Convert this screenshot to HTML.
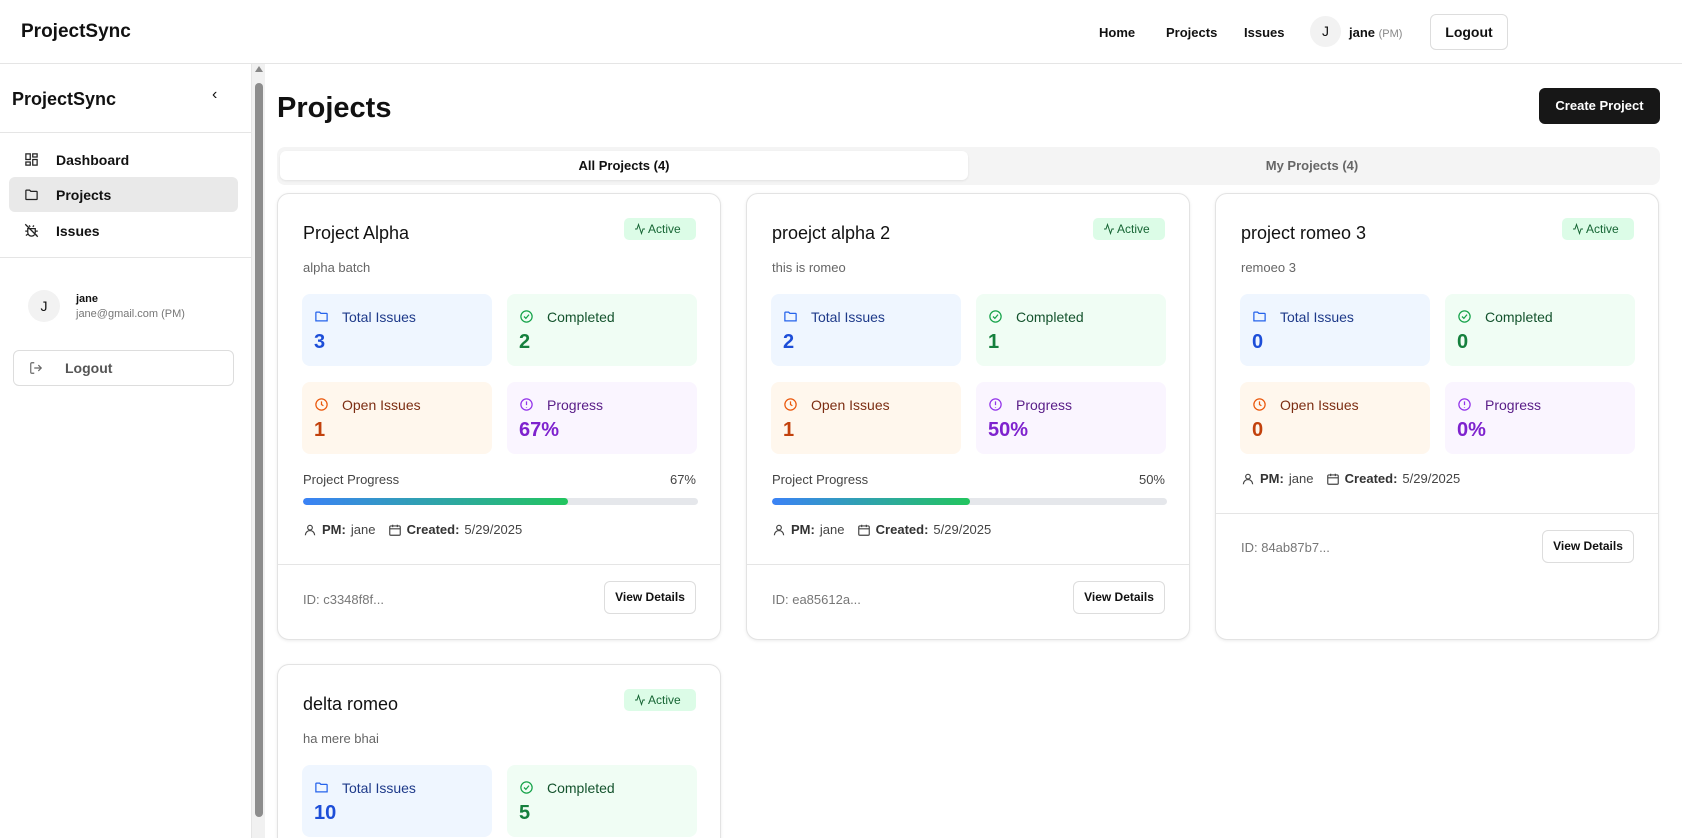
<!DOCTYPE html>
<html><head><meta charset="utf-8"><style>
*{box-sizing:border-box;margin:0;padding:0}
html{height:838px;overflow:hidden}
body{width:1682px;height:838px;overflow:hidden;font-family:"Liberation Sans",sans-serif;background:#fff;color:#111;position:relative}
.top{position:absolute;left:0;top:0;width:1682px;height:64px;border-bottom:1px solid #e5e5e5;background:#fff}
.brand{position:absolute;left:21px;top:21px;font-size:19px;font-weight:bold}
.nl{position:absolute;top:25px;font-size:13px;font-weight:bold}
.side{position:absolute;left:0;top:64px;width:252px;height:774px;border-right:1px solid #e5e5e5}
.scroll{position:absolute;left:252px;top:64px;width:13px;height:774px;background:#f1f1f1}
.thumb{position:absolute;left:3px;top:19px;width:8px;height:734px;background:#8d8d8d;border-radius:4px}
.av{position:absolute;border-radius:50%;background:#f2f2f2;text-align:center;font-size:14px}
.card{position:absolute;width:444px;border:1px solid #e3e3e3;border-radius:12px;box-shadow:0 1px 3px rgba(0,0,0,.08);background:#fff;overflow:hidden}
.ct{position:absolute;left:25px;top:29px;font-size:18px;font-weight:500}
.badge{position:absolute;right:24px;top:24px;width:72px;height:22px;background:#dcfce7;border-radius:5px;color:#166534;font-size:12px;line-height:22px;padding-left:24px}
.badge svg{position:absolute;left:10px;top:5px}
.desc{position:absolute;left:25px;top:66px;font-size:13px;color:#666}
.st{position:absolute;width:190px;height:72px;border-radius:8px}
.st .l{position:absolute;left:40px;top:15px;font-size:14px}
.st svg{position:absolute;left:12px;top:15px}
.st .n{position:absolute;left:12px;top:37px;font-size:20px;font-weight:bold}
.b{background:#eff6ff}.b .l{color:#1e3a8a}.b .n{color:#1d4ed8}
.g{background:#f0fdf4}.g .l{color:#14532d}.g .n{color:#15803d}
.o{background:#fff7ed}.o .l{color:#7c2d12}.o .n{color:#c2410c}
.p{background:#faf5ff}.p .l{color:#581c87}.p .n{color:#7e22ce}
.pl{position:absolute;left:25px;font-size:13px;color:#444}
.pr{position:absolute;right:24px;font-size:13px;color:#444}
.bar{position:absolute;left:25px;width:395px;height:7px;border-radius:4px;background:#e5e7eb;overflow:hidden}
.bar div{height:100%;background:linear-gradient(90deg,#3b82f6,#22c55e);border-radius:4px}
.meta{position:absolute;left:25px;font-size:13px;color:#444;display:flex;align-items:center;gap:5px}
.meta b{color:#333}
.hr{position:absolute;left:0;width:100%;border-top:1px solid #e5e5e5}
.id{position:absolute;left:25px;font-size:13px;color:#777}
.vd{position:absolute;right:24px;width:92px;height:33px;border:1px solid #ddd;border-radius:6px;font-size:12px;font-weight:bold;text-align:center;line-height:31px}
</style></head><body>
<div class="top">
<div class="brand">ProjectSync</div>
<div class="nl" style="left:1099px">Home</div>
<div class="nl" style="left:1166px">Projects</div>
<div class="nl" style="left:1244px">Issues</div>
<div class="av" style="left:1310px;top:16px;width:31px;height:31px;line-height:31px">J</div>
<div class="nl" style="left:1349px">jane <span style="color:#888;font-weight:normal;font-size:11px">(PM)</span></div>
<div style="position:absolute;left:1430px;top:14px;width:78px;height:36px;border:1px solid #ddd;border-radius:6px;font-size:14px;font-weight:bold;text-align:center;line-height:34px">Logout</div>
</div>
<div class="side">
<div style="position:absolute;left:12px;top:25px;font-size:18px;font-weight:bold">ProjectSync</div>
<div style="position:absolute;left:212px;top:22px;font-size:16px">&#8249;</div>
<div style="position:absolute;left:0;top:68px;width:251px;border-top:1px solid #e5e5e5"></div>
<svg style="position:absolute;left:24px;top:88px" width="15" height="15" viewBox="0 0 24 24" fill="none" stroke="#222" stroke-width="2"><rect x="3" y="3" width="7" height="9"/><rect x="14" y="3" width="7" height="5"/><rect x="14" y="12" width="7" height="9"/><rect x="3" y="16" width="7" height="5"/></svg>
<div style="position:absolute;left:56px;top:88px;font-size:14px;font-weight:bold">Dashboard</div>
<div style="position:absolute;left:9px;top:113px;width:229px;height:35px;background:#e9e9e9;border-radius:6px"></div>
<svg style="position:absolute;left:24px;top:123px" width="15" height="15" viewBox="0 0 24 24" fill="none" stroke="#222" stroke-width="2"><path d="M3 6a1 1 0 0 1 1-1h5l2 2h9a1 1 0 0 1 1 1v11a1 1 0 0 1-1 1H4a1 1 0 0 1-1-1z"/></svg>
<div style="position:absolute;left:56px;top:123px;font-size:14px;font-weight:bold">Projects</div>
<svg style="position:absolute;left:24px;top:159px" width="15" height="15" viewBox="0 0 24 24" fill="none" stroke="#222" stroke-width="2"><path d="M2 2l20 20M8 4l2 2M16 4l-2 2M6 9h12v6a6 6 0 0 1-12 0zM2 13h4M18 13h4M3 20l3-2M21 20l-3-2"/></svg>
<div style="position:absolute;left:56px;top:159px;font-size:14px;font-weight:bold">Issues</div>
<div style="position:absolute;left:0;top:193px;width:251px;border-top:1px solid #e5e5e5"></div>
<div class="av" style="left:28px;top:226px;width:32px;height:32px;line-height:32px">J</div>
<div style="position:absolute;left:76px;top:229px;font-size:11px;font-weight:bold">jane</div>
<div style="position:absolute;left:76px;top:244px;font-size:11px;color:#777">jane@gmail.com (PM)</div>
<div style="position:absolute;left:13px;top:286px;width:221px;height:36px;border:1px solid #ddd;border-radius:6px"></div>
<svg style="position:absolute;left:29px;top:297px" width="14" height="14" viewBox="0 0 24 24" fill="none" stroke="#666" stroke-width="2"><path d="M9 21H5a2 2 0 0 1-2-2V5a2 2 0 0 1 2-2h4M16 17l5-5-5-5M21 12H9"/></svg>
<div style="position:absolute;left:65px;top:296px;font-size:14px;font-weight:bold;color:#555">Logout</div>
</div>
<div class="scroll"><div style="position:absolute;left:3px;top:2px;width:0;height:0;border-left:4px solid transparent;border-right:4px solid transparent;border-bottom:6px solid #888"></div><div class="thumb"></div></div>

<div style="position:absolute;left:277px;top:92px;font-size:29px;font-weight:bold">Projects</div>
<div style="position:absolute;left:1539px;top:88px;width:121px;height:36px;background:#171717;color:#fff;border-radius:6px;font-size:13px;font-weight:bold;text-align:center;line-height:36px">Create Project</div>
<div style="position:absolute;left:277px;top:147px;width:1383px;height:38px;background:#f4f4f4;border-radius:8px">
<div style="position:absolute;left:3px;top:4px;width:688px;height:29px;background:#fff;border-radius:6px;box-shadow:0 1px 2px rgba(0,0,0,.08);text-align:center;line-height:29px;font-size:13px;font-weight:bold">All Projects (4)</div>
<div style="position:absolute;left:691px;top:4px;width:688px;height:29px;text-align:center;line-height:29px;font-size:13px;font-weight:bold;color:#666">My Projects (4)</div>
</div>

<div class="card" style="left:277px;top:193px;height:447px">
<div class="ct">Project Alpha</div>
<div class="badge"><svg width="12" height="12" viewBox="0 0 24 24" fill="none" stroke="#166534" stroke-width="2"><path d="M22 12h-4l-3 9L9 3l-3 9H2"/></svg>Active</div>
<div class="desc">alpha batch</div>
<div class="st b" style="left:24px;top:100px"><svg width="15" height="15" viewBox="0 0 24 24" fill="none" stroke="#2563eb" stroke-width="2"><path d="M3 6a1 1 0 0 1 1-1h5l2 2h9a1 1 0 0 1 1 1v11H3z"/></svg><div class="l">Total Issues</div><div class="n">3</div></div>
<div class="st g" style="left:229px;top:100px"><svg width="15" height="15" viewBox="0 0 24 24" fill="none" stroke="#16a34a" stroke-width="2"><circle cx="12" cy="12" r="9"/><path d="M8 12l3 3 5-6"/></svg><div class="l">Completed</div><div class="n">2</div></div>
<div class="st o" style="left:24px;top:188px"><svg width="15" height="15" viewBox="0 0 24 24" fill="none" stroke="#ea580c" stroke-width="2"><circle cx="12" cy="12" r="9"/><path d="M12 7v5l3 2"/></svg><div class="l">Open Issues</div><div class="n">1</div></div>
<div class="st p" style="left:229px;top:188px"><svg width="15" height="15" viewBox="0 0 24 24" fill="none" stroke="#9333ea" stroke-width="2"><circle cx="12" cy="12" r="9"/><path d="M12 7v6M12 16v1"/></svg><div class="l">Progress</div><div class="n">67%</div></div>
<div class="pl" style="top:278px">Project Progress</div><div class="pr" style="top:278px">67%</div>
<div class="bar" style="top:304px"><div style="width:67%"></div></div>
<div class="meta" style="top:328px"><svg width="14" height="14" viewBox="0 0 24 24" fill="none" stroke="#444" stroke-width="2"><circle cx="12" cy="8" r="4"/><path d="M4 21a8 8 0 0 1 16 0"/></svg><b>PM:</b> jane &nbsp;<svg width="14" height="14" viewBox="0 0 24 24" fill="none" stroke="#444" stroke-width="2"><rect x="3" y="5" width="18" height="16" rx="2"/><path d="M3 10h18M8 3v4M16 3v4"/></svg><b>Created:</b> 5/29/2025</div>
<div class="hr" style="top:370px"></div>
<div class="id" style="top:398px">ID: c3348f8f...</div>
<div class="vd" style="top:387px">View Details</div>
</div>

<div class="card" style="left:746px;top:193px;height:447px">
<div class="ct">proejct alpha 2</div>
<div class="badge"><svg width="12" height="12" viewBox="0 0 24 24" fill="none" stroke="#166534" stroke-width="2"><path d="M22 12h-4l-3 9L9 3l-3 9H2"/></svg>Active</div>
<div class="desc">this is romeo</div>
<div class="st b" style="left:24px;top:100px"><svg width="15" height="15" viewBox="0 0 24 24" fill="none" stroke="#2563eb" stroke-width="2"><path d="M3 6a1 1 0 0 1 1-1h5l2 2h9a1 1 0 0 1 1 1v11H3z"/></svg><div class="l">Total Issues</div><div class="n">2</div></div>
<div class="st g" style="left:229px;top:100px"><svg width="15" height="15" viewBox="0 0 24 24" fill="none" stroke="#16a34a" stroke-width="2"><circle cx="12" cy="12" r="9"/><path d="M8 12l3 3 5-6"/></svg><div class="l">Completed</div><div class="n">1</div></div>
<div class="st o" style="left:24px;top:188px"><svg width="15" height="15" viewBox="0 0 24 24" fill="none" stroke="#ea580c" stroke-width="2"><circle cx="12" cy="12" r="9"/><path d="M12 7v5l3 2"/></svg><div class="l">Open Issues</div><div class="n">1</div></div>
<div class="st p" style="left:229px;top:188px"><svg width="15" height="15" viewBox="0 0 24 24" fill="none" stroke="#9333ea" stroke-width="2"><circle cx="12" cy="12" r="9"/><path d="M12 7v6M12 16v1"/></svg><div class="l">Progress</div><div class="n">50%</div></div>
<div class="pl" style="top:278px">Project Progress</div><div class="pr" style="top:278px">50%</div>
<div class="bar" style="top:304px"><div style="width:50%"></div></div>
<div class="meta" style="top:328px"><svg width="14" height="14" viewBox="0 0 24 24" fill="none" stroke="#444" stroke-width="2"><circle cx="12" cy="8" r="4"/><path d="M4 21a8 8 0 0 1 16 0"/></svg><b>PM:</b> jane &nbsp;<svg width="14" height="14" viewBox="0 0 24 24" fill="none" stroke="#444" stroke-width="2"><rect x="3" y="5" width="18" height="16" rx="2"/><path d="M3 10h18M8 3v4M16 3v4"/></svg><b>Created:</b> 5/29/2025</div>
<div class="hr" style="top:370px"></div>
<div class="id" style="top:398px">ID: ea85612a...</div>
<div class="vd" style="top:387px">View Details</div>
</div>

<div class="card" style="left:1215px;top:193px;height:447px">
<div class="ct">project romeo 3</div>
<div class="badge"><svg width="12" height="12" viewBox="0 0 24 24" fill="none" stroke="#166534" stroke-width="2"><path d="M22 12h-4l-3 9L9 3l-3 9H2"/></svg>Active</div>
<div class="desc">remoeo 3</div>
<div class="st b" style="left:24px;top:100px"><svg width="15" height="15" viewBox="0 0 24 24" fill="none" stroke="#2563eb" stroke-width="2"><path d="M3 6a1 1 0 0 1 1-1h5l2 2h9a1 1 0 0 1 1 1v11H3z"/></svg><div class="l">Total Issues</div><div class="n">0</div></div>
<div class="st g" style="left:229px;top:100px"><svg width="15" height="15" viewBox="0 0 24 24" fill="none" stroke="#16a34a" stroke-width="2"><circle cx="12" cy="12" r="9"/><path d="M8 12l3 3 5-6"/></svg><div class="l">Completed</div><div class="n">0</div></div>
<div class="st o" style="left:24px;top:188px"><svg width="15" height="15" viewBox="0 0 24 24" fill="none" stroke="#ea580c" stroke-width="2"><circle cx="12" cy="12" r="9"/><path d="M12 7v5l3 2"/></svg><div class="l">Open Issues</div><div class="n">0</div></div>
<div class="st p" style="left:229px;top:188px"><svg width="15" height="15" viewBox="0 0 24 24" fill="none" stroke="#9333ea" stroke-width="2"><circle cx="12" cy="12" r="9"/><path d="M12 7v6M12 16v1"/></svg><div class="l">Progress</div><div class="n">0%</div></div>
<div class="meta" style="top:277px"><svg width="14" height="14" viewBox="0 0 24 24" fill="none" stroke="#444" stroke-width="2"><circle cx="12" cy="8" r="4"/><path d="M4 21a8 8 0 0 1 16 0"/></svg><b>PM:</b> jane &nbsp;<svg width="14" height="14" viewBox="0 0 24 24" fill="none" stroke="#444" stroke-width="2"><rect x="3" y="5" width="18" height="16" rx="2"/><path d="M3 10h18M8 3v4M16 3v4"/></svg><b>Created:</b> 5/29/2025</div>
<div class="hr" style="top:319px"></div>
<div class="id" style="top:346px">ID: 84ab87b7...</div>
<div class="vd" style="top:336px">View Details</div>
</div>

<div class="card" style="left:277px;top:664px;height:180px;border-bottom:none;border-radius:12px 12px 0 0">
<div class="ct">delta romeo</div>
<div class="badge"><svg width="12" height="12" viewBox="0 0 24 24" fill="none" stroke="#166534" stroke-width="2"><path d="M22 12h-4l-3 9L9 3l-3 9H2"/></svg>Active</div>
<div class="desc">ha mere bhai</div>
<div class="st b" style="left:24px;top:100px"><svg width="15" height="15" viewBox="0 0 24 24" fill="none" stroke="#2563eb" stroke-width="2"><path d="M3 6a1 1 0 0 1 1-1h5l2 2h9a1 1 0 0 1 1 1v11H3z"/></svg><div class="l">Total Issues</div><div class="n">10</div></div>
<div class="st g" style="left:229px;top:100px"><svg width="15" height="15" viewBox="0 0 24 24" fill="none" stroke="#16a34a" stroke-width="2"><circle cx="12" cy="12" r="9"/><path d="M8 12l3 3 5-6"/></svg><div class="l">Completed</div><div class="n">5</div></div>
</div>
</body></html>
